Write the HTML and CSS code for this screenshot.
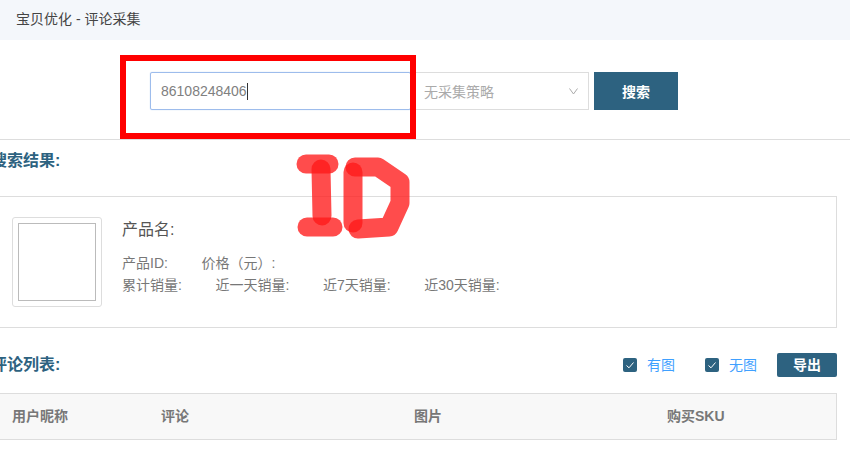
FILE: index.html
```html
<!DOCTYPE html>
<html>

<head>
    <title>宝贝优化 - 评论采集</title>
    <link rel="stylesheet" href="styles.css">
</head>

<body>
    <header class="top-bar">宝贝优化 - 评论采集</header>

    <section class="page">
        <div class="search-bar">
            <div class="search-input">86108248406<span class="caret"></span></div>
            <div class="search-select">
                <span>无采集策略</span>
                <svg class="chevron" width="9" height="7" viewBox="0 0 9 7">
                    <polyline points="0.5,0.5 4.5,6 8.5,0.5" />
                </svg>
            </div>
            <button class="search-btn">搜索</button>
        </div>

        <h2 class="section-title result-title">搜索结果:</h2>

        <div class="product-card">
            <div class="thumb">
                <div class="thumb-inner"></div>
            </div>
            <div class="product-info">
                <div class="product-name">产品名:</div>
                <div class="meta-row meta-first">
                    <span>产品ID:</span>
                    <span>价格（元）:</span>
                </div>
                <div class="meta-row">
                    <span>累计销量:</span>
                    <span>近一天销量:</span>
                    <span>近7天销量:</span>
                    <span>近30天销量:</span>
                </div>
            </div>
        </div>

        <div class="list-head">
            <h2 class="section-title">评论列表:</h2>
            <div class="list-tools">
                <label class="check">
                    <svg class="check-box" width="14" height="14" viewBox="0 0 14 14">
                        <rect width="14" height="14" rx="2" />
                        <polyline points="3.5,7.5 6,9.8 10.5,4.5" />
                    </svg>
                    <span class="check-text">有图</span>
                </label>
                <label class="check">
                    <svg class="check-box" width="14" height="14" viewBox="0 0 14 14">
                        <rect width="14" height="14" rx="2" />
                        <polyline points="3.5,7.5 6,9.8 10.5,4.5" />
                    </svg>
                    <span class="check-text">无图</span>
                </label>
                <button class="export-btn">导出</button>
            </div>
        </div>

        <div class="table-head">
            <div>用户昵称</div>
            <div>评论</div>
            <div>图片</div>
            <div>购买SKU</div>
        </div>
    </section>

    <!-- hand drawn notes on top of the screenshot -->
    <div class="note-box"></div>
    <svg class="note-id" width="120" height="90" viewBox="292 152 120 90">
        <path d="M306 164 L329 164" />
        <path d="M321 169 L322 216" />
        <path d="M307 227 L333 227" />
        <path d="M353 172 L353 223" />
        <path d="M355 167 L378 167 L400 182 L400 203 L389 227 L358 229" />
    </svg>
</body>

</html>
```

FILE: styles.css
```css
* {
    box-sizing: border-box;
}

html,
body {
    height: 100%;
}

body {
    margin: 0;
    overflow: hidden;
    background: #FFF;
    font-family: "Liberation Sans", "Noto Sans CJK SC", sans-serif;
    font-size: 14px;
    color: #777;
}

.top-bar {
    height: 40px;
    padding-left: 16px;
    line-height: 38px;
    background-color: #f4f7fb;
    color: #444;
}

.page {
    margin-left: -9px;
    margin-right: 13px;
}

.search-bar {
    display: flex;
    justify-content: flex-start;
    margin-right: -13px;
    padding: 32px 0 29px 159px;
    border-bottom: 1px solid #ddd;
}

.search-input {
    width: 261px;
    height: 38px;
    padding-left: 10px;
    line-height: 36px;
    border: 1px solid #9dbcec;
    border-radius: 2px;
    box-shadow: 0 0 1px #9dbcec;
    color: #808080;
}

.caret {
    display: inline-block;
    width: 1px;
    height: 17px;
    vertical-align: -4px;
    background-color: #333;
}

.search-select {
    display: flex;
    align-items: center;
    justify-content: space-between;
    width: 178px;
    height: 38px;
    padding: 0 10px 0 12px;
    border: 1px solid #ddd;
    color: #aaa;
}

.chevron polyline {
    fill: none;
    stroke: #aaa;
}

button {
    border: none;
    color: #FFF;
    font-family: inherit;
    font-size: 14px;
    background-color: #2d6280;
}

.search-btn {
    width: 84px;
    height: 38px;
    margin-left: 5px;
    font-weight: bold;
}

.section-title {
    margin: 0;
    font-size: 16px;
    font-weight: bold;
    color: #2d6280;
}

.result-title {
    padding-top: 9px;
    height: 56px;
    line-height: 24px;
}

.product-card {
    display: flex;
    height: 132px;
    padding: 20px;
    border: 1px solid #ddd;
}

.thumb {
    width: 90px;
    height: 90px;
    padding: 5px;
    border: 1px solid #ddd;
    border-radius: 3px;
}

.thumb-inner {
    height: 100%;
    border: 1px solid #bbb;
}

.product-info {
    margin-left: 20px;
}

.product-name {
    margin-top: 2px;
    font-size: 16px;
    line-height: 22px;
    color: #555;
}

.meta-row {
    display: flex;
    gap: 33.6px;
    line-height: 22px;
}

.meta-first {
    margin-top: 11px;
}

.list-head {
    display: flex;
    align-items: center;
    justify-content: space-between;
    height: 24px;
    margin-top: 25px;
}

.list-head .section-title {
    padding-bottom: 5px;
}

.list-tools {
    display: flex;
    align-items: center;
}

.check {
    display: flex;
    align-items: center;
    margin-right: 30px;
    color: #3fa0ff;
}

.check:last-of-type {
    margin-right: 20px;
}

.check-text {
    margin-top: -3px;
}

.check-box {
    margin-right: 10px;
}

.check-box rect {
    fill: #2d6280;
}

.check-box polyline {
    fill: none;
    stroke: #FFF;
}

.export-btn {
    width: 60px;
    height: 24px;
    padding: 0 0 3px;
    border-radius: 2px;
    font-weight: bold;
}

.table-head {
    display: grid;
    grid-template-columns: 149px 253px 253px 1fr;
    align-items: center;
    height: 47px;
    margin-top: 16px;
    padding: 0 0 3px 20px;
    border: 1px solid #ddd;
    background-color: #f8f8f8;
    font-weight: bold;
}

.note-box {
    position: absolute;
    left: 120px;
    top: 55px;
    width: 296px;
    height: 84px;
    border: 6px solid #f00;
}

.note-id {
    position: absolute;
    left: 292px;
    top: 152px;
}

.note-id path {
    fill: none;
    stroke: #ff1a1a;
    stroke-opacity: 0.78;
    stroke-width: 19;
    stroke-linecap: round;
    stroke-linejoin: round;
}
```
